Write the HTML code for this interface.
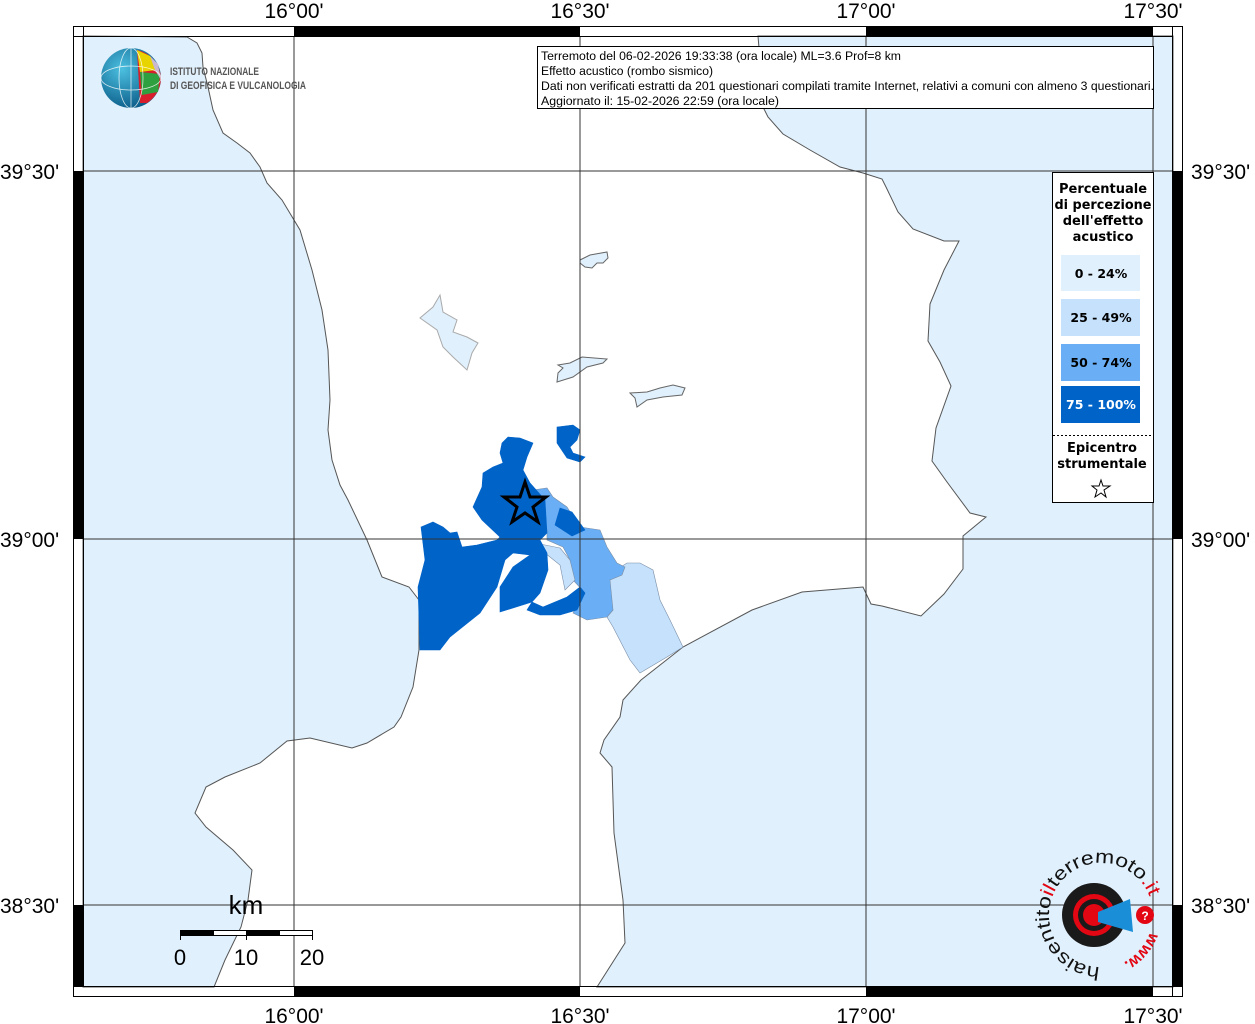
<!DOCTYPE html>
<html><head><meta charset="utf-8"><style>
html,body{margin:0;padding:0;background:#fff;}
body{width:1255px;height:1024px;position:relative;overflow:hidden;font-family:"Liberation Sans",sans-serif;}
</style></head><body>
<svg width="1255" height="1024" viewBox="0 0 1255 1024" xmlns="http://www.w3.org/2000/svg" style="position:absolute;left:0;top:0">
<rect x="83" y="36" width="1090" height="951" fill="#fff"/>
<polygon fill="#e0f0fc" stroke="#555" stroke-width="1" points="83,36 187,37 197,43 202,53 203,67 208,87 213,110 223,133 237,143 250,153 260,167 267,183 282,200 300,230 312,270 322,310 328,350 330,400 328,430 332,460 340,485 348,500 367,540 382,577 409,587 419,600 419,650 413,687 401,717 394,727 367,743 352,748 310,738 287,741 260,763 225,777 206,787 195,813 206,827 233,850 252,870 248,900 241,927 225,960 214,987 83,987"/>
<polygon fill="#e0f0fc" stroke="#555" stroke-width="1" points="758,36 764,109 768,117 783,134 810,150 840,167 863,173 882,179 886,187 898,212 913,229 944,241 959,241 944,270 930,304 928,341 940,362 951,386 936,428 932,461 947,482 970,513 986,517 963,536 963,569 944,594 921,616 882,606 871,604 863,587 802,592 752,610 683,647 641,680 623,700 620,717 604,740 600,753 612,767 614,833 623,900 625,943 597,987 1173,987 1173,36"/>
<g fill="#e0f0fc" stroke="#666" stroke-width="1">
<polygon points="580,260 590,255 607,252 608,258 603,263 597,263 592,268 585,267 580,263"/>
<polygon points="558,365 570,363 582,357 607,359 603,363 587,367 573,377 557,382 558,373 563,368"/>
<polygon points="630,393 647,392 660,388 673,385 685,388 682,395 663,397 647,400 637,407 635,398"/>
<polygon stroke="#aaa" points="440,295 443,312 457,320 453,332 467,337 478,343 472,353 467,370 453,357 443,347 437,330 420,318 433,307"/>
</g>
<g stroke="#7a8ea8" stroke-width="0.6">
<polygon fill="#c6e1fb" points="603,578 627,563 640,563 653,570 660,600 670,620 683,647 667,657 640,673 630,660 613,627 607,617 613,610"/>
<polygon fill="#6aaff5" points="533,490 547,488 553,497 567,507 580,527 600,530 607,547 617,563 625,567 622,575 610,580 613,610 607,617 587,620 573,613 585,593 573,580 570,560 563,547 547,540 547,530"/>
<polygon fill="#c6e1fb" points="535,543 560,548 570,560 575,580 565,590 560,565 545,553"/>
<polygon fill="#0063c8" stroke="#0063c8" points="560,508 572,512 585,530 572,536 555,525"/>
<polygon fill="#0063c8" stroke="#0063c8" points="421,527 433,522 443,527 450,533 457,532 462,547 477,545 497,540 500,537 505,560 497,587 480,613 450,637 440,650 420,650 418,587 425,560"/>
<polygon fill="#0063c8" stroke="#0063c8" points="500,537 482,520 473,507 482,487 483,473 493,467 503,463 500,453 502,443 508,437 520,438 533,443 527,457 523,470 530,483 545,500 547,533 540,540 547,553 548,570 540,593 532,602 500,612 500,587 513,567 530,555 513,553 505,560"/>
<polygon fill="#0063c8" stroke="#0063c8" points="532,602 543,607 567,597 580,587 585,593 577,610 560,615 540,615 527,610"/>
<polygon fill="#0063c8" stroke="#0063c8" points="557,427 573,425 580,430 577,440 570,447 573,453 585,457 580,462 567,458 557,443"/>
</g>
<g stroke="#333" stroke-width="1">
<line x1="294" y1="36" x2="294" y2="987"/><line x1="580" y1="36" x2="580" y2="987"/>
<line x1="866" y1="36" x2="866" y2="987"/><line x1="1153" y1="36" x2="1153" y2="987"/>
<line x1="83" y1="171" x2="1173" y2="171"/><line x1="83" y1="539" x2="1173" y2="539"/>
<line x1="83" y1="905" x2="1173" y2="905"/>
</g>
<polygon fill="none" stroke="#000" stroke-width="3" points="525,482 530,497 546,497 533,507 538,522 525,513 512,522 517,507 504,497 520,497"/>
<rect x="73.5" y="26.5" width="1109" height="970" fill="none" stroke="#000"/>
<rect x="83.5" y="36.5" width="1089" height="950" fill="none" stroke="#000"/>
<g fill="#000">
<rect x="294" y="26" width="286" height="10"/><rect x="866" y="26" width="287" height="10"/>
<rect x="294" y="987" width="286" height="10"/><rect x="866" y="987" width="287" height="10"/>
<rect x="73" y="171" width="10" height="368"/><rect x="73" y="905" width="10" height="82"/>
<rect x="1173" y="171" width="10" height="368"/><rect x="1173" y="905" width="10" height="82"/>
</g>
<g stroke="#000" stroke-width="1"><line x1="73" y1="36.5" x2="83" y2="36.5"/><line x1="83.5" y1="26" x2="83.5" y2="36"/><line x1="1172.5" y1="26" x2="1172.5" y2="36"/><line x1="73" y1="986.5" x2="83" y2="986.5"/><line x1="1172.5" y1="987" x2="1172.5" y2="997"/><line x1="1173" y1="986.5" x2="1183" y2="986.5"/></g>
<g font-family="Liberation Sans, sans-serif" font-size="21" fill="#000" text-anchor="middle">
<text x="294" y="18">16°00'</text><text x="580" y="18">16°30'</text><text x="866" y="18">17°00'</text><text x="1153" y="18">17°30'</text>
<text x="294" y="1023">16°00'</text><text x="580" y="1023">16°30'</text><text x="866" y="1023">17°00'</text><text x="1153" y="1023">17°30'</text>
</g>
<g font-family="Liberation Sans, sans-serif" font-size="21" fill="#000">
<text x="0" y="179">39°30'</text><text x="0" y="547">39°00'</text><text x="0" y="913">38°30'</text>
<text x="1191" y="179">39°30'</text><text x="1191" y="547">39°00'</text><text x="1191" y="913">38°30'</text>
</g>
<rect x="537.5" y="46.5" width="616" height="62" fill="#fff" stroke="#000"/>
<g font-family="Liberation Sans, sans-serif" font-size="12.2" fill="#000">
<text x="541" y="60" textLength="360" lengthAdjust="spacingAndGlyphs">Terremoto del 06-02-2026 19:33:38 (ora locale) ML=3.6 Prof=8 km</text>
<text x="541" y="75" textLength="172" lengthAdjust="spacingAndGlyphs">Effetto acustico (rombo sismico)</text>
<text x="541" y="90" textLength="613" lengthAdjust="spacingAndGlyphs">Dati non verificati estratti da 201 questionari compilati tramite Internet, relativi a comuni con almeno 3 questionari.</text>
<text x="541" y="105" textLength="238" lengthAdjust="spacingAndGlyphs">Aggiornato il: 15-02-2026 22:59 (ora locale)</text>
</g>
<rect x="1052.5" y="172.5" width="101" height="330" fill="#fff" stroke="#000"/>
<g font-family="DejaVu Sans, sans-serif" font-weight="bold" font-size="13" fill="#000" text-anchor="middle">
<text x="1103" y="193">Percentuale</text><text x="1103" y="209" textLength="97" lengthAdjust="spacingAndGlyphs">di percezione</text><text x="1103" y="225">dell'effetto</text><text x="1103" y="241">acustico</text>
<rect x="1061" y="255" width="79" height="36" fill="#e0f0fc"/><text x="1101" y="278" font-size="12.5">0 - 24%</text>
<rect x="1061" y="299" width="79" height="37" fill="#c6e1fb"/><text x="1101" y="322" font-size="12.5">25 - 49%</text>
<rect x="1061" y="344" width="79" height="37" fill="#6aaff5"/><text x="1101" y="367" font-size="12.5">50 - 74%</text>
<rect x="1061" y="386" width="79" height="37" fill="#0063c8"/><text x="1101" y="409" font-size="12.5" fill="#fff">75 - 100%</text>
<line x1="1053" y1="435.5" x2="1153" y2="435.5" stroke="#000" stroke-dasharray="2,2"/>
<text x="1102" y="452">Epicentro</text><text x="1102" y="468">strumentale</text>
</g>
<polygon fill="none" stroke="#000" stroke-width="1" points="1101,480 1103,486 1110,486 1104,490 1106,497 1101,493 1095,497 1097,490 1092,486 1099,486"/>
<text x="246" y="914" font-family="Liberation Sans, sans-serif" font-size="26" text-anchor="middle">km</text>
<rect x="180.5" y="930.5" width="132" height="5" fill="#fff" stroke="#000"/>
<rect x="180" y="930" width="34" height="6" fill="#000"/><rect x="246" y="930" width="34" height="6" fill="#000"/>
<g stroke="#000"><line x1="180.5" y1="930" x2="180.5" y2="940"/><line x1="246.5" y1="930" x2="246.5" y2="940"/><line x1="312.5" y1="930" x2="312.5" y2="940"/></g>
<g font-family="Liberation Sans, sans-serif" font-size="22" text-anchor="middle"><text x="180" y="965">0</text><text x="246" y="965">10</text><text x="312" y="965">20</text></g>
<defs><radialGradient id="gl" cx="0.35" cy="0.35" r="0.7"><stop offset="0" stop-color="#4cc0e0"/><stop offset="1" stop-color="#0b5c88"/></radialGradient></defs>
<circle cx="131" cy="78" r="30" fill="url(#gl)"/>
<path d="M137,50 A30,30 0 0 1 161,78 A30,30 0 0 1 147,103 L140,103 Z" fill="#d81e2c"/>
<path d="M137,50 L150,56 L156,70 L140,72 Z" fill="#e8d400"/>
<path d="M140,72 L160,74 L158,92 L142,95 Z" fill="#2fa040"/>
<path d="M150,56 L158,64 L161,80 L155,70 Z" fill="#c8b8d0"/>
<g stroke="#fff" stroke-width="0.8" fill="none" opacity="0.8"><ellipse cx="131" cy="78" rx="12" ry="30"/><ellipse cx="131" cy="78" rx="30" ry="12"/><line x1="131" y1="48" x2="131" y2="108"/></g>
<g font-family="Liberation Sans Narrow, Liberation Sans, sans-serif" font-size="11" fill="#555" font-weight="bold"><text x="170" y="75" textLength="89" lengthAdjust="spacingAndGlyphs">ISTITUTO NAZIONALE</text><text x="170" y="89" textLength="136" lengthAdjust="spacingAndGlyphs">DI GEOFISICA E VULCANOLOGIA</text></g>
<circle cx="1094" cy="915" r="32" fill="#1a1a1a"/>
<circle cx="1094" cy="915" r="21" fill="#e30613"/>
<circle cx="1094" cy="915" r="16" fill="#1a1a1a"/>
<circle cx="1094" cy="915" r="11" fill="#e30613"/>
<path d="M1098,912 L1130,899 L1133,932 L1098,922 Z" fill="#1a8fd8"/>
<circle cx="1145" cy="915" r="9" fill="#e30613"/><text x="1145" y="920" font-size="12" fill="#fff" text-anchor="middle" font-weight="bold">?</text>
<defs><path id="arc" d="M1100,967 A52,52 0 1 1 1152,905"/><path id="arc2" d="M1150,932 A56,56 0 0 1 1108,968"/></defs>
<text font-family="Liberation Sans, sans-serif" font-size="19" fill="#111"><textPath href="#arc" textLength="225" lengthAdjust="spacingAndGlyphs">haisentito<tspan fill="#e30613">il</tspan>terremoto<tspan fill="#e30613">.it</tspan></textPath></text>
<text font-family="Liberation Sans, sans-serif" font-size="16" fill="#e30613" font-weight="bold"><textPath href="#arc2">www.</textPath></text>
</svg>
</body></html>
